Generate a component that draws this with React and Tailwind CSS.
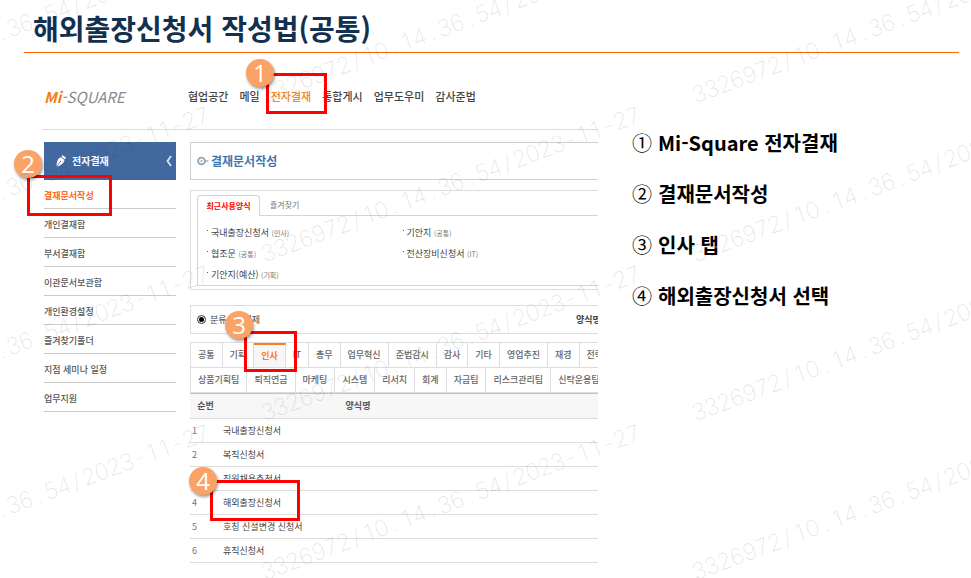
import React from "react";

const NAV = ["협업공간", "메일", "전자결재", "통합게시", "업무도우미", "감사준법"];

const SIDE = [
  "결재문서작성",
  "개인결재함",
  "부서결재함",
  "이관문서보관함",
  "개인환경설정",
  "즐겨찾기폴더",
  "지점 세미나 일정",
  "업무지원",
];

const RECENT = [
  ["국내출장신청서", "인사"],
  ["기안지", "공통"],
  ["협조문", "공통"],
  ["전산장비신청서", "IT"],
  ["기안지(예산)", "기획"],
];

const TABS_TOP = ["공통", "기획", "인사", "IT", "총무", "업무혁신", "준법감시", "감사", "기타", "영업추진", "재경", "전략"];
const TABS_BOTTOM = ["상품기획팀", "퇴직연금", "마케팅", "시스템", "리서치", "회계", "자금팀", "리스크관리팀", "신탁운용팀"];

const FORMS = ["국내출장신청서", "복직신청서", "직원채용추천서", "해외출장신청서", "호칭 신설변경 신청서", "휴직신청서"];

const STEPS = [
  ["①", "Mi-Square 전자결재"],
  ["②", "결재문서작성"],
  ["③", "인사 탭"],
  ["④", "해외출장신청서 선택"],
];

const CALLOUTS = [
  { n: 1, badge: "left-[246px] top-[6px]", box: "left-[266px] top-[20px] w-[61px] h-[41px]" },
  { n: 2, badge: "left-[14px] top-[97px]", box: "left-[27px] top-[122px] w-[85px] h-[41px]" },
  { n: 3, badge: "left-[225px] top-[258px]", box: "left-[244px] top-[278px] w-[53px] h-[41px]" },
  { n: 4, badge: "left-[189px] top-[414px]", box: "left-[210px] top-[427px] w-[90px] h-[41px]" },
];

const MARK = "3326972/10.14.36.54/2023-11-27";
const MARK_X = [-169, 262, 693];
const MARK_Y = [82, 241, 400, 559];

function Watermark() {
  return (
    <div aria-hidden="true" className="pointer-events-none absolute inset-0 overflow-hidden">
      {MARK_Y.map((y) =>
        MARK_X.map((x) => (
          <div
            key={`${x}:${y}`}
            className="absolute flex h-[28px] w-[403px] origin-left rotate-[-20.5deg] items-center font-['Inter','Liberation_Sans',sans-serif] text-[23px] font-extralight text-[#202040]/12"
            style={{ left: x, top: y }}
          >
            {MARK.split("").map((c, i) => (
              <span key={i} className="flex w-0 flex-1 justify-center">{c}</span>
            ))}
          </div>
        ))
      )}
    </div>
  );
}

function Callout({ n, badge, box }) {
  return (
    <>
      <div className={`absolute border-[3px] border-[#ff0000] ${box}`} />
      <div
        className={`absolute flex size-7 items-center justify-center rounded-full bg-[#fba266] font-['Open_Sans','Noto_Sans',sans-serif] text-[24px] leading-none text-white shadow-[1px_2px_3px_rgba(0,0,0,0.4)] ${badge}`}
      >
        {n}
      </div>
    </>
  );
}

function TabRow({ items, active }) {
  return (
    <div className="flex h-[25px] border-b border-[#dddddd]">
      {items.map((t) => (
        <button
          key={t}
          type="button"
          className={`shrink-0 border-r border-[#dddddd] px-[7px] ${
            t === active
              ? "border-t-2 border-t-[#ff7a20] bg-[#f7f7f7] font-bold text-[#ff7a20]"
              : "font-medium text-[#666666]"
          }`}
        >
          {t}
        </button>
      ))}
    </div>
  );
}

function Sidebar() {
  return (
    <aside className="w-[132px] shrink-0">
      <div className="flex h-[38px] items-center bg-[#4268a0] pr-1 pl-3 text-white">
        <svg viewBox="0 0 12 14" className="h-[14px] w-[11px]" aria-hidden="true">
          <path d="M7.2 0.6 L11 3.4 L9.6 5 L5.9 2.2 Z" fill="#fff" />
          <path d="M5.4 2.8 L9.2 5.6 C9.4 8.4 7 10.8 1.2 13.2 L4.8 8.2 A0.7 0.7 0 1 0 4.3 7.9 L0.6 12.7 C0.8 7 2 3.8 5.4 2.8 Z" fill="#fff" />
        </svg>
        <span className="ml-[5px] flex-1 text-[10px] font-bold">전자결재</span>
        <svg viewBox="0 0 6 12" className="h-3 w-[6px]" aria-hidden="true">
          <path d="M5 1 L1.5 6 L5 11" fill="none" stroke="#dbe4f2" strokeWidth="1.8" />
        </svg>
      </div>
      <ul>
        {SIDE.map((s, i) => (
          <li key={s} className="flex h-[29px] items-center border-b border-[#cccccc] pt-1">
            <a href="#" className={i === 0 ? "font-bold text-[#ff6a1f]" : "font-medium text-[#555555]"}>
              {s}
            </a>
          </li>
        ))}
      </ul>
    </aside>
  );
}

function Workspace() {
  return (
    <div className="ml-[14px] min-w-0 flex-1 overflow-hidden">
      <div className="flex h-[38px] items-center border border-r-0 border-[#cfcfcf] pl-[6px]">
        <svg viewBox="0 0 12 10" className="h-[10px] w-3" aria-hidden="true">
          <circle cx="4.5" cy="5" r="3.4" fill="none" stroke="#93a3b3" strokeWidth="1.8" />
          <circle cx="4.5" cy="5" r="1" fill="#93a3b3" />
          <path d="M8 5 H11.5" stroke="#93a3b3" strokeWidth="1.2" />
        </svg>
        <h2 className="ml-[2px] text-[12px] font-bold text-[#3f76b0]">결재문서작성</h2>
      </div>

      <section className="mt-[10px] border border-r-0 border-[#dddddd] pt-1 pb-[3px] pl-[6px]">
        <div className="flex h-[21px] text-[8px]">
          <button type="button" className="w-[63px] rounded-t-sm border border-b-0 border-[#d4d4d4] font-bold text-[#ff0000]">
            최근사용양식
          </button>
          <button type="button" className="flex-1 border-b border-[#d4d4d4] pl-[10px] text-left text-[#777777]">
            즐겨찾기
          </button>
        </div>
        <ul className="grid grid-cols-2 border-b border-l border-[#d4d4d4] pt-[6px] pl-[9px]">
          {RECENT.map(([name, dept]) => (
            <li key={name} className="flex h-[21px] items-center text-[#444444]">
              <span className="mr-[3px] mb-1 size-px bg-[#555555]" />
              <a href="#">
                {name} <span className="text-[7px] text-[#777777]">({dept})</span>
              </a>
            </li>
          ))}
        </ul>
      </section>

      <div className="mt-[15px] flex h-[29px] items-center border border-r-0 border-[#dddddd] pl-[6px]">
        <input
          id="by-class"
          type="radio"
          defaultChecked
          className="size-[9px] appearance-none rounded-full border border-[#333333] bg-black bg-clip-content p-px"
        />
        <label htmlFor="by-class" className="ml-1 text-[#444444]">분류</label>
        <span className="ml-[17px] flex-1 text-[#444444]">결제</span>
        <span className="w-[22px] overflow-hidden font-bold whitespace-nowrap text-[#444444]">양식명</span>
      </div>

      <div className="mt-2 border-t border-l border-[#dddddd]">
        <TabRow items={TABS_TOP} active="인사" />
        <TabRow items={TABS_BOTTOM} />
      </div>

      <table className="w-full table-fixed border-collapse text-[#555555]">
        <thead>
          <tr className="h-[25px] border-t border-b border-t-[#c4c4c4] border-b-[#dddddd] bg-[#f7f7f7]">
            <th className="w-[31px] p-0 font-bold">순번</th>
            <th className="w-[274px] p-0 font-bold">양식명</th>
            <th className="p-0" />
          </tr>
        </thead>
        <tbody>
          {FORMS.map((f, i) => (
            <tr key={f} className="h-6 border-b border-[#dddddd]">
              <td className="p-0 pl-[2px] text-[#777777]">{i + 1}</td>
              <td className="p-0 pl-[2px] text-[#444444]">{f}</td>
              <td className="p-0" />
            </tr>
          ))}
        </tbody>
      </table>
    </div>
  );
}

export default function App() {
  return (
    <div lang="ko" className="relative min-h-screen overflow-hidden bg-white font-['Noto_Sans_CJK_KR',sans-serif]">
      <header className="mr-3 ml-6 border-b border-[#ff6600] pt-2 pb-1 pl-[9px]">
        <h1 className="text-[28px] leading-[40px] font-bold text-[#12304f]">해외출장신청서 작성법(공통)</h1>
      </header>

      <main className="grid grid-cols-[598fr_373fr]">
        <figure className="relative min-w-0 pl-[42px] text-[9px] leading-[14px]">
          <div className="flex h-[77px] items-center border-b border-[#dddddd] pt-[10px] pl-[2px]">
            <a href="#" className="w-[144px] shrink-0 text-[15px] leading-none whitespace-nowrap text-[#8a8a8a] italic">
              <b className="text-[#f57c14]">Mi</b>-SQUARE
            </a>
            <nav className="flex gap-[11px] text-[11px] font-medium whitespace-nowrap text-[#444444]">
              {NAV.map((n) => (
                <a key={n} href="#" className={n === "전자결재" ? "text-[#f58220]" : ""}>{n}</a>
              ))}
            </nav>
          </div>
          <div className="flex pt-3 pl-[2px]">
            <Sidebar />
            <Workspace />
          </div>
          {CALLOUTS.map((c) => (
            <Callout key={c.n} {...c} />
          ))}
        </figure>

        <ol className="flex flex-col gap-[21px] pt-[75px] pl-[34px] text-[20px] leading-[30px] font-bold text-black">
          {STEPS.map(([mark, text]) => (
            <li key={mark} className="flex gap-[6px]">
              <span className="font-normal">{mark}</span>
              <span>{text}</span>
            </li>
          ))}
        </ol>
      </main>

      <Watermark />
    </div>
  );
}
